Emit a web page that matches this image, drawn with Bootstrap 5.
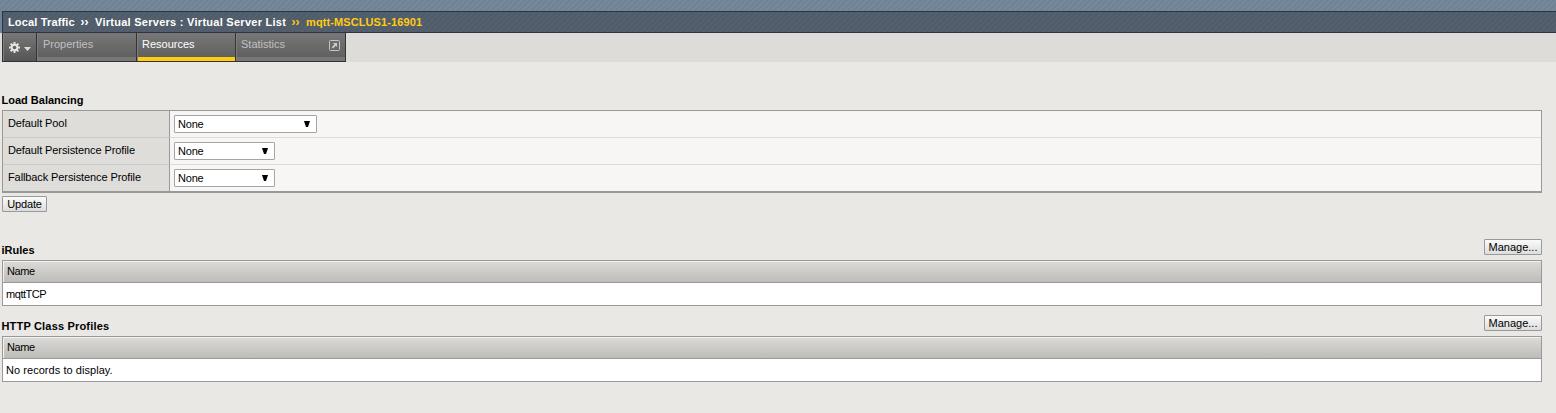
<!DOCTYPE html>
<html lang="en">
<head>
<meta charset="utf-8">
<title>Virtual Server Resources</title>
<link href="https://cdn.jsdelivr.net/npm/bootstrap@5.3.0/dist/css/bootstrap.min.css" rel="stylesheet">
<script src="https://cdn.jsdelivr.net/npm/bootstrap@5.3.0/dist/js/bootstrap.bundle.min.js"></script>
<style>
body{font-family:"Liberation Sans",Arial,sans-serif;font-size:11px;line-height:13px;color:#000;background:#e9e8e4;height:413px;overflow:hidden}
.topstrip{height:11px;background:repeating-linear-gradient(135deg,#76889b 0 2px,#708296 2px 4px)}
.crumbs{height:22px;margin-left:2px;padding:0 0 0 5px;color:#fff;font-weight:bold;border:1px solid #2d3640;border-width:1px 0 1px 1px;background:repeating-linear-gradient(135deg,#54606d 0 2px,#505c69 2px 4px)}
.crumbwrap{background:#708296}
.crumbs .sep{width:20px;text-align:center;padding-right:1px;font-size:12px}
.crumbs .here{color:#fc1}
.t1{width:67px;letter-spacing:.15px}
.t2{width:191px;letter-spacing:.27px}
.t3{letter-spacing:.1px}
.t8,.t9,.t10{letter-spacing:-.1px}
.t11{letter-spacing:-.15px}
.t14{letter-spacing:-.4px}
.t15{letter-spacing:-.45px}
.t16{letter-spacing:.18px}
.t17{letter-spacing:.05px}
.n{letter-spacing:-.2px}
.tabbar{height:29px;background:#dddcd8;padding-left:2px}
.tabbar .nav-link{height:29px;padding:5px 0 0 5px;border:0;border-radius:0;border-right:1px solid #333;border-bottom:1px solid #333;color:#c0c0c0;background:linear-gradient(#777,#606060 24px,#777 24px);box-shadow:inset 1px 0 #7f7f7f}
.tabbar .gear{width:35px;padding:9px 0 0 6px;border-left:1px solid #333;background:linear-gradient(#777,#555)}
.tabbar .nav-link.active{color:#fff;background:linear-gradient(#787878,#606060 24px,#fc1 24px)}
.main{width:1542px;padding-left:2px}
h2{font-size:11px;line-height:13px;font-weight:bold;margin:0 0 0 -.5px}
.settings{height:83px;border:1px solid #999;border-bottom:2px solid #999;background:#f7f6f5}
.settings .line{height:27px;border-bottom:1px solid #dddcda}
.settings .line:last-child{height:26px;border-bottom:0}
.settings label{width:167px;padding:6px 0 0 5px;background:#dedddA;border-right:1px solid #999;border-bottom:1px solid #c9c9c5;align-self:stretch;margin-bottom:-1px}
.settings .line:last-child label{margin:0;border-bottom:0}
.picker{width:101px;height:18px;margin:4px 0 0 4px;padding:0 6px 0 3px;background:#fff;border:1px solid #a5a5a5;border-radius:1px;line-height:16px}
.picker svg{margin-top:5px}
.picker.wide{width:143px}
.btn.plain{font-size:11px;line-height:14px;height:16px;padding:0;border:1px solid #999;border-radius:1px;background:linear-gradient(#fafafa,#ddd);color:#000}
.grid-list{height:46px;border:1px solid #999;background:#fff}
.grid-list .head{height:22px;padding:4px 4px 0;border-bottom:1px solid #999;background:linear-gradient(#dcdbd8,#bdbcb8);box-shadow:inset 1px 1px #f2f2f0}
.grid-list .item{padding:5px 3px 0}
</style>
</head>
<body>
<div class="topstrip"></div>
<div class="crumbwrap"><div class="crumbs d-flex align-items-center text-nowrap">
<span class="t1">Local Traffic</span><span class="sep">››</span><span class="t2">Virtual Servers : Virtual Server List</span><span class="sep here">››</span><span class="t3 here">mqtt-MSCLUS1-16901</span>
</div></div>
<nav class="tabbar nav flex-nowrap">
<a class="nav-link gear d-flex align-items-start"><svg width="11" height="11" viewBox="0 0 11 11"><g stroke="#e4e4e4" stroke-width="2"><path d="M5.5 0v11M0 5.5h11M1.6 1.6l7.8 7.8M9.4 1.6l-7.8 7.8"/></g><circle cx="5.5" cy="5.5" r="3.7" fill="#e4e4e4"/><circle cx="5.5" cy="5.5" r="1.8" fill="#606060"/></svg><svg class="ms-1" width="7" height="4" viewBox="0 0 7 4" style="margin-top:5px"><path d="M0 0h7L3.500 4z" fill="#ddd"/></svg></a>
<a class="nav-link" style="width:100px;padding-left:6px"><span>Properties</span></a>
<a class="nav-link active" style="width:99px"><span>Resources</span></a>
<a class="nav-link d-flex justify-content-between align-items-start" style="width:110px"><span>Statistics</span><svg width="11" height="11" viewBox="0 0 11 11" style="margin:2px 5px 0 0"><rect x=".5" y=".5" width="10" height="10" rx="1" fill="none" stroke="#c4c4c4"/><path d="M4 3h4v4L6.700 5.700 4 8.400 2.700 7.200 5.400 4.400z" fill="#ccc"/></svg></a>
</nav>
<main class="main">
<h2 style="padding-top:32px;height:48px"><span>Load Balancing</span></h2>
<section class="settings">
<div class="line d-flex align-items-start"><label><span class="t8">Default Pool</span></label><div class="picker wide d-flex justify-content-between"><span class="n">None</span><svg width="6" height="6" viewBox="0 0 6 6"><path d="M0 0h6L4 6H2z"/></svg></div></div>
<div class="line d-flex align-items-start"><label><span class="t9">Default Persistence Profile</span></label><div class="picker d-flex justify-content-between"><span class="n">None</span><svg width="6" height="6" viewBox="0 0 6 6"><path d="M0 0h6L4 6H2z"/></svg></div></div>
<div class="line d-flex align-items-start"><label><span class="t10">Fallback Persistence Profile</span></label><div class="picker d-flex justify-content-between"><span class="n">None</span><svg width="6" height="6" viewBox="0 0 6 6"><path d="M0 0h6L4 6H2z"/></svg></div></div>
</section>
<button class="btn plain d-block" style="width:45px;margin-top:3px"><span class="t11">Update</span></button>
<div class="d-flex justify-content-between" style="margin-top:27px;height:21px"><h2 style="padding-top:5px"><span>iRules</span></h2><button class="btn plain" style="width:58px"><span>Manage...</span></button></div>
<section class="grid-list"><div class="head"><span class="t14">Name</span></div><div class="item"><span class="t15">mqttTCP</span></div></section>
<div class="d-flex justify-content-between" style="margin-top:9px;height:21px"><h2 style="padding-top:5px"><span class="t16">HTTP Class Profiles</span></h2><button class="btn plain" style="width:58px"><span>Manage...</span></button></div>
<section class="grid-list"><div class="head"><span class="t14">Name</span></div><div class="item"><span class="t17">No records to display.</span></div></section>
</main>
</body>
</html>
